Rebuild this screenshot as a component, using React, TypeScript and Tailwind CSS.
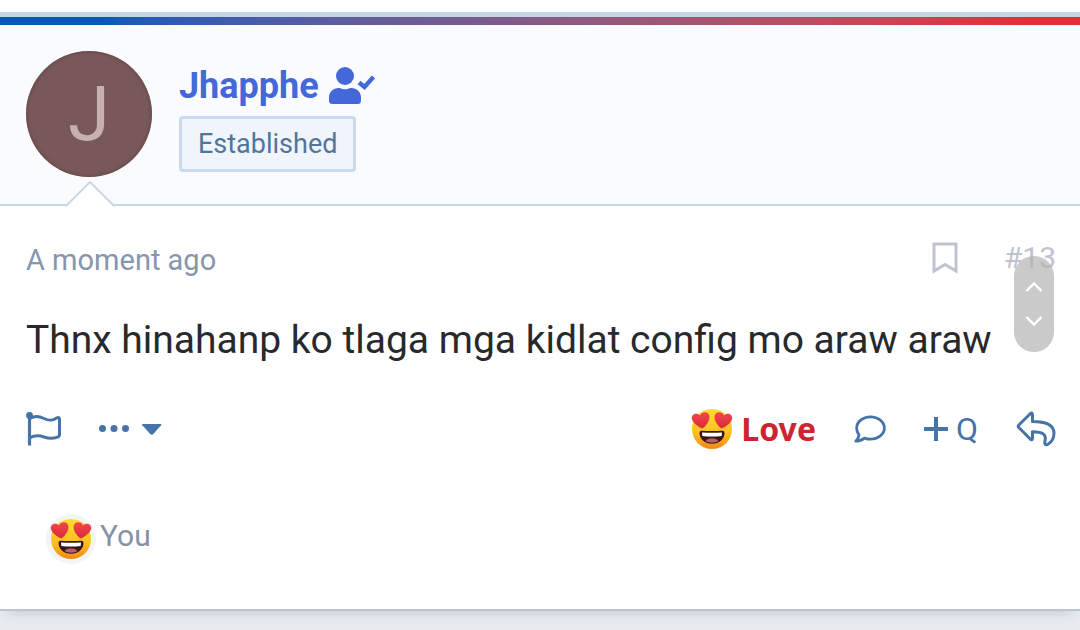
import React from 'react'

interface IconProps {
    className?: string
}

const UserCheckIcon = ({ className }: IconProps) => (
    <svg viewBox="0 0 46 38" className={className} fill="currentColor" aria-hidden="true">
        <circle cx="16" cy="9" r="9" />
        <path d="M0 33v-2.500C0 25 4.300 21 9.600 21h1.200a12.600 12.600 0 0 0 10.400 0h1.200C27.700 21 32 25 32 30.500V33.500a3.500 3.500 0 0 1-3.500 3.500h-25A3.500 3.500 0 0 1 0 33.500z" />
        <path d="M30 15.500l5.500 4.500L44.500 10" fill="none" stroke="currentColor" strokeWidth="4.400" />
    </svg>
)

const BookmarkIcon = ({ className }: IconProps) => (
    <svg viewBox="0 0 26 32" className={className} fill="none" stroke="currentColor" strokeWidth="3" aria-hidden="true">
        <path d="M2 2h22v27L13 22.500 2 29z" />
    </svg>
)

const FlagIcon = ({ className }: IconProps) => (
    <svg viewBox="0 0 36 34" className={className} fill="none" stroke="currentColor" strokeWidth="3" strokeLinejoin="round" strokeLinecap="round" aria-hidden="true">
        <circle cx="3.500" cy="3.500" r="3.400" fill="currentColor" stroke="none" />
        <path d="M3.500 4v29.500" strokeLinecap="butt" strokeWidth="3.200" />
        <path d="M4 6.500c4-2.500 9-2.500 14 0s10 1.500 12.500-.5q3-1.500 3 1.200V22.500q0 2-2 2.700c-4.500 1.600-8.500 1.600-13.500-.2s-10-1.500-14 .6" />
    </svg>
)

const MoreIcon = ({ className }: IconProps) => (
    <svg viewBox="0 0 64 14" className={className} fill="currentColor" aria-hidden="true">
        <circle cx="4.500" cy="6.500" r="3.500" />
        <circle cx="16" cy="6.500" r="3.500" />
        <circle cx="27.500" cy="6.500" r="3.500" />
        <path d="M45 2h17.500q1.500 0 .6 1.300l-7.800 8.700q-1.500 1.500-3 0l-8-8.700Q43.500 2 45 2z" />
    </svg>
)

const CommentIcon = ({ className }: IconProps) => (
    <svg viewBox="0 0 32 28" className={className} fill="none" stroke="currentColor" strokeWidth="2.800" strokeLinejoin="round" aria-hidden="true">
        <path d="M16.500 1.800c7.700 0 13.900 5 13.900 11.200s-6.200 11.200-13.900 11.200c-2.200 0-4.200-.4-6-1.100C8.300 24.800 5 26.200 1.700 26.200c1.700-1.700 3.100-4.200 3.300-6.300C3.500 18 2.600 15.600 2.600 13c0-6.200 6.200-11.200 13.900-11.200z" />
    </svg>
)

const ReplyIcon = ({ className }: IconProps) => (
    <svg viewBox="0 0 40 36" className={className} fill="none" stroke="currentColor" strokeWidth="3" strokeLinejoin="round" aria-hidden="true">
        <path d="M14 3Q16.500 .8 16.500 4v6.500c13.500 0 21.500 3 21.500 11.700 0 4.500-2.200 8.600-6 11-2 1.300-3.800 0-3.200-2.200 2-7.500-1.300-10-12.300-10.200V27q0 3-2.500.8L2.800 16.500q-1.300-1.300 0-2.500z" />
    </svg>
)

const HeartEyes = ({ className }: IconProps) => (
    <svg viewBox="0 0 42 42" className={className} aria-hidden="true">
        <defs>
            <linearGradient id="face" x1="0" y1="0" x2="0" y2="1">
                <stop offset="0" stopColor="#fddd2e" />
                <stop offset="0.600" stopColor="#fdbf1f" />
                <stop offset="1" stopColor="#ee8a17" />
            </linearGradient>
            <linearGradient id="heart" x1="0" y1="0" x2="0" y2="1">
                <stop offset="0" stopColor="#f2464f" />
                <stop offset="1" stopColor="#d92a35" />
            </linearGradient>
        </defs>
        <circle cx="21" cy="21" r="20" fill="url(#face)" />
        <g fill="url(#heart)">
            <path d="M11.500 20.500C6.500 18.500 1.500 14.500.8 10.500.2 6 6 3.800 9 7.500c1.700-4.200 8.200-4.300 9.300.2.900 4.300-2.800 9.800-6.800 12.800z" />
            <path d="M30.500 20.500c5-2 10-6 10.700-10C41.800 6 36 3.800 33 7.500c-1.700-4.200-8.200-4.300-9.300.2-.9 4.300 2.800 9.800 6.800 12.800z" />
        </g>
        <path d="M8.500 25c0-1.600 1-2.300 2.500-2.200 6 .4 14 .4 20 0 1.500-.1 2.500.6 2.500 2.200 0 6.200-5.500 10.700-12.500 10.700S8.500 31.200 8.500 25z" fill="#3a1418" />
        <path d="M11 24.400c6.600.5 13.400.5 20 0l-.3 3.600c-6.300.7-13.100.7-19.400 0z" fill="#fff" />
        <path d="M14.500 33c1.500-2 4-2.400 6.500-2.400s5 .4 6.500 2.400c-3.600 2.300-9.400 2.300-13 0z" fill="#b8606c" />
    </svg>
)

const Chevron = ({ className }: IconProps) => (
    <svg viewBox="0 0 18 12" className={className} fill="none" stroke="currentColor" strokeWidth="2.400" aria-hidden="true">
        <path d="M1.500 10 9 2.500l7.500 7.500" />
    </svg>
)

const PostHeader = () => (
    <header className="relative flex gap-[27px] border-b-2 border-[#c9d8e2] bg-[#fafbfe] px-[26px] pt-[26px] pb-[27px]">
        <div className="flex size-[126px] items-center justify-center rounded-full bg-[#795859] text-[76px] leading-none text-[#c9b0b0] shadow-[inset_0_0_4px_#5a4040]">
            J
        </div>
        <div className="flex flex-col items-start pt-[14px]">
            <div className="flex items-center gap-[10px] text-[#4468d8]">
                <a href="#profile" className="text-[36px] leading-[42px] font-bold">Jhapphe</a>
                <UserCheckIcon className="h-[38px] w-[46px]" />
            </div>
            <span className="mt-[9px] rounded border-[3px] border-[#cbdaea] bg-[#eff5fb] px-4 py-[9px] text-[27px] leading-8 text-[#53749a]">
                Established
            </span>
        </div>
        <svg viewBox="0 0 50 26" className="absolute -bottom-[3px] left-[65px] h-[26px] w-[50px]" aria-hidden="true">
            <path d="M1 26v-2L25 1l24 23v2z" fill="#fff" />
            <path d="M0 24.500h1.500L25 1l23.500 23.500H50" fill="none" stroke="#c9d8e2" strokeWidth="2" />
        </svg>
    </header>
)

const ScrollPill = () => (
    <div className="absolute top-[50px] right-[26px] flex h-24 w-10 flex-col items-center justify-between rounded-full bg-[#b4b4b4]/70 py-[25px] text-white">
        <button type="button" aria-label="Scroll up">
            <Chevron className="h-3 w-[18px]" />
        </button>
        <button type="button" aria-label="Scroll down">
            <Chevron className="h-3 w-[18px] rotate-180" />
        </button>
    </div>
)

const PostActions = () => (
    <div className="mt-[35px] flex h-12 items-center justify-between text-[#4673a8]">
        <div className="flex items-center gap-9">
            <button type="button" aria-label="Report">
                <FlagIcon className="h-[34px] w-9" />
            </button>
            <button type="button" aria-label="More">
                <MoreIcon className="h-[14px] w-16" />
            </button>
        </div>
        <div className="flex items-center gap-[38px]">
            <button type="button" className="flex items-center gap-2 font-['Noto_Sans'] text-[32px] leading-10 font-bold text-[#cf2233]">
                <HeartEyes className="size-[42px]" />
                Love
            </button>
            <button type="button" aria-label="Comment">
                <CommentIcon className="h-7 w-8" />
            </button>
            <button type="button" aria-label="Quote" className="flex items-center gap-2 text-[32px] leading-10">
                <svg viewBox="0 0 24 24" className="size-6" fill="none" stroke="currentColor" strokeWidth="4" aria-hidden="true">
                    <path d="M12 0v24M0 12h24" />
                </svg>
                Q
            </button>
            <button type="button" aria-label="Reply">
                <ReplyIcon className="h-9 w-10" />
            </button>
        </div>
    </div>
)

const App = () => {
    return (
        <div className="min-h-screen overflow-hidden bg-[#e7ebf0] font-[Roboto,sans-serif]">
            <div className="h-3 bg-[#fefefe]" />
            <article className="border-b-2 border-[#bdc6ce] bg-white shadow-[0_10px_10px_-8px_#c3ccd6]">
                <div className="h-[5px] bg-[#c5d5e6]" />
                <div className="h-2 bg-linear-to-r from-[#0a59b8] from-10% to-[#df3038] to-95%" />
                <PostHeader />
                <div className="relative pt-[30px] pr-6 pb-[45px] pl-[26px]">
                    <div className="flex items-center justify-between text-[29px] leading-10 text-[#8795ad]">
                        <time className="pt-1">A moment ago</time>
                        <div className="flex items-center gap-[46px] text-[#c0c3cf]">
                            <button type="button" aria-label="Bookmark">
                                <BookmarkIcon className="h-8 w-[26px]" />
                            </button>
                            <a href="#post-13" className="text-[30px]">#13</a>
                        </div>
                    </div>
                    <p className="mt-[30px] text-[39px] leading-[60px] text-[#27292d]">
                        Thnx hinahanp ko tlaga mga kidlat config mo araw araw
                    </p>
                    <PostActions />
                    <div className="mt-[61px] flex items-center gap-1 pl-5 text-[30px] leading-[42px] text-[#8491a7]">
                        <span className="flex size-[50px] items-center justify-center rounded-full bg-[#f2f4f6]">
                            <HeartEyes className="size-[42px]" />
                        </span>
                        <a href="#reactions" className="pb-[6px]">You</a>
                    </div>
                    <ScrollPill />
                </div>
            </article>
        </div>
    )
}

export default App
